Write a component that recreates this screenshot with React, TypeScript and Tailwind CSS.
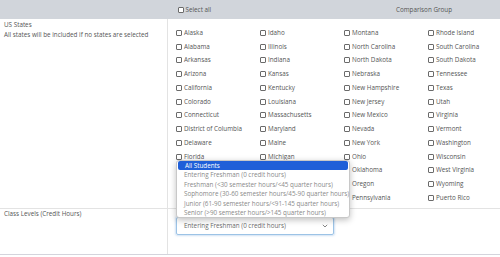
import React from "react";

const cols: string[][] = [
  ["Alaska","Alabama","Arkansas","Arizona","California","Colorado","Connecticut","District of Columbia","Delaware","Florida","Georgia","Hawaii","Iowa"],
  ["Idaho","Illinois","Indiana","Kansas","Kentucky","Louisiana","Massachusetts","Maryland","Maine","Michigan","Minnesota","Missouri","Mississippi"],
  ["Montana","North Carolina","North Dakota","Nebraska","New Hampshire","New Jersey","New Mexico","Nevada","New York","Ohio","Oklahoma","Oregon","Pennsylvania"],
  ["Rhode Island","South Carolina","South Dakota","Tennessee","Texas","Utah","Virginia","Vermont","Washington","Wisconsin","West Virginia","Wyoming","Puerto Rico"],
];

const options = [
  "All Students",
  "Entering Freshman (0 credit hours)",
  "Freshman (<30 semester hours/<45 quarter hours)",
  "Sophomore (30-60 semester hours/45-90 quarter hours)",
  "Junior (61-90 semester hours/<91-145 quarter hours)",
  "Senior (>90 semester hours/>145 quarter hours)",
];

function Box() {
  return <span className="inline-block w-[6px] h-[6px] border border-[#6b6b6b] rounded-[1px] bg-white shrink-0" />;
}

export default function App() {
  return (
    <div className="w-[500px] h-[257px] bg-white text-[6.3px] leading-[10px] text-[#555] overflow-hidden" style={{ fontFamily: '"Open Sans", "Noto Sans", sans-serif' }}>
      <div className="flex h-[19px] bg-[#d1d5db] items-center">
        <div className="w-[168px] shrink-0" />
        <div className="flex items-center gap-[1.5px] pl-[10px] w-[220px] shrink-0">
          <Box />
          <span>Select all</span>
        </div>
        <div className="pl-[8px] whitespace-nowrap">Comparison Group</div>
      </div>
      <div className="flex border-b border-[#e3e3e3] h-[190px]">
        <div className="w-[168px] shrink-0 border-r border-[#e3e3e3] pl-[4px] pt-[1px]">
          <div>US States</div>
          <div>All states will be included if no states are selected</div>
        </div>
        <div className="flex pl-[8px] pt-[7px] shrink-0">
          {cols.map((c, i) => (
            <div key={i} className="w-[84px] shrink-0 flex flex-col">
              {c.map((s) => (
                <div key={s} className="h-[13.75px] flex items-center gap-[2px] whitespace-nowrap">
                  <Box />
                  <span>{s}</span>
                </div>
              ))}
            </div>
          ))}
        </div>
      </div>
      <div className="flex border-b-[1.5px] border-[#d4d4dc] h-[46px]">
        <div className="w-[168px] shrink-0 border-r border-[#e3e3e3] pl-[4px]">Class Levels (Credit Hours)</div>
        <div className="relative pl-[8px] pt-[8px]">
          <div className="w-[158px] h-[18px] border border-[#9cc3e6] rounded-[2px] shadow-[0_0_2px_1px_rgba(120,170,220,0.35)] flex items-center justify-between pl-[7px] pr-[5px] text-[#6b6b6b]">
            <span>Entering Freshman (0 credit hours)</span>
            <svg width="6" height="4" viewBox="0 0 6 4"><path d="M0.8 0.8 L3 3 L5.2 0.8" fill="none" stroke="#777" strokeWidth="0.9" /></svg>
          </div>
          <div className="absolute left-[8px] top-[-49px] w-[174px] bg-white border border-[#c8c8c8] rounded-[3px] shadow-[0_2px_6px_rgba(0,0,0,0.25)] z-10">
            {options.map((o, i) => (
              <div key={o} className={i === 0 ? "h-[9.4px] leading-[9.4px] pl-[7px] bg-[#1f5fd8] text-white rounded-[2px] mx-[1px]" : "h-[9.4px] leading-[9.4px] pl-[7px] text-[#8a8a8a] whitespace-nowrap"}>
                {o}
              </div>
            ))}
          </div>
        </div>
      </div>
    </div>
  );
}
